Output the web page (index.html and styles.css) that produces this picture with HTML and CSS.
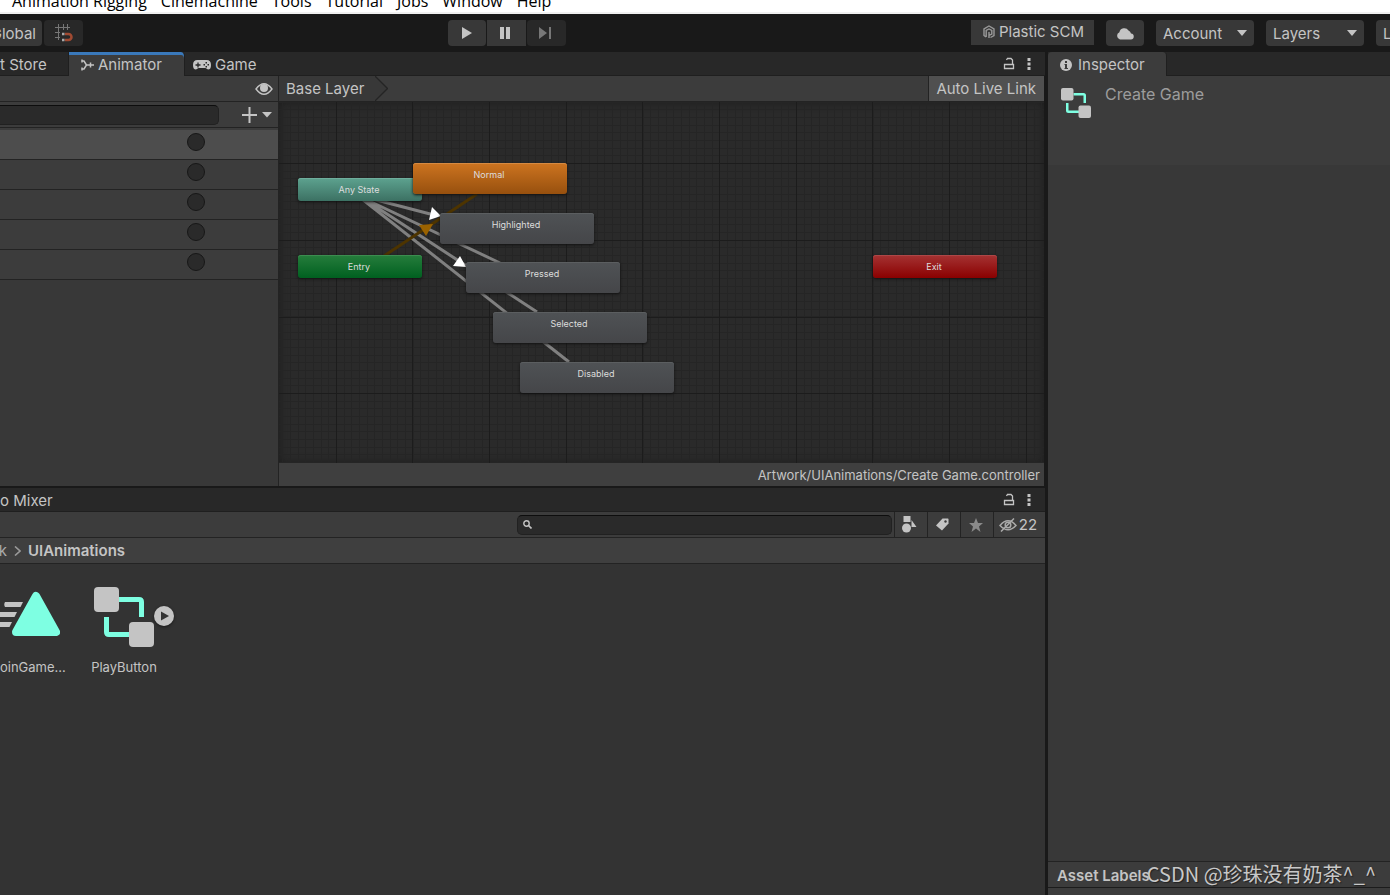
FILE: index.html
```html
<!DOCTYPE html>
<html lang="en">
<head>
<meta charset="utf-8">
<title>Animator</title>
<link rel="stylesheet" href="styles.css">
</head>
<body>
<svg class="defs" aria-hidden="true">
  <symbol id="lock" viewBox="0 0 12 14"><path d="M1.500 7.500h9v4h-9zM9.500 7V3L8 1.500H4.500L3.500 3" fill="none" stroke="currentColor" stroke-width="1.300"/></symbol>
  <symbol id="kebab" viewBox="0 0 4 14"><path d="M.5 1h3v3h-3zM.5 5.500h3v3h-3zM.5 10h3v3h-3z" fill="currentColor"/></symbol>
  <symbol id="controller" viewBox="0 0 60 60">
    <path d="M25 12.500H45Q47.500 12.500 47.500 15V30M12.500 30V45Q12.500 47.500 15 47.500H36" fill="none" stroke="#7effe2" stroke-width="5"/>
    <rect width="25" height="25" rx="4" fill="#c4c4c4"/><rect x="35" y="35" width="25" height="25" rx="4" fill="#c4c4c4"/>
  </symbol>
</svg>
<div class="app">
  <nav class="menubar">
    <a href="#">Animation Rigging</a><a href="#">Cinemachine</a><a href="#">Tools</a><a href="#">Tutorial</a><a href="#">Jobs</a><a href="#">Window</a><a href="#">Help</a>
  </nav>
  <header class="toolbar">
    <div class="tool-left">
      <button class="btn global">Global</button>
      <button class="btn dim snap" aria-label="Grid snapping">
        <svg width="18" height="18" viewBox="0 0 18 18" fill="none"><path d="M0 3.500H15M0 8.500H5M0 13.500H5M3.500 0V16M8.500 0V6M12.500 0V6" stroke="#777"/><path d="M10 10h3.500a2.500 2.500 0 0 1 0 6H10" stroke="#a04a32" stroke-width="2.500"/><path d="M7 8.700h2.500v2.500H7zM7 14.700h2.500v2.500H7z" fill="#aaa"/></svg>
      </button>
    </div>
    <div class="transport">
      <button class="btn" aria-label="Play"><svg width="10" height="12" viewBox="0 0 10 12"><path d="M0 0L10 6L0 12z" fill="currentColor"/></svg></button>
      <button class="btn square" aria-label="Pause"><svg width="10" height="12" viewBox="0 0 10 12"><path d="M0 0h4v12H0zM6 0h4v12H6z" fill="currentColor"/></svg></button>
      <button class="btn dim step" aria-label="Step" disabled><svg width="12" height="12" viewBox="0 0 12 12"><path d="M0 0L8 6L0 12zM10 0h2v12h-2z" fill="currentColor"/></svg></button>
    </div>
    <div class="tool-right">
      <button class="plastic"><svg width="12" height="14" viewBox="0 0 12 14" fill="none" stroke="currentColor" stroke-width="1.400"><path d="M3 12L1 10.500V4L6 1l5 3v6.500L7.500 12.500M3.200 12V5.500L6 4l2.800 1.500v3.500L6 10.500V13M6 10V7"/></svg>Plastic SCM</button>
      <button class="btn" aria-label="Cloud"><svg width="18" height="13" viewBox="0 0 18 13"><path d="M4 12.500a3.800 3.800 0 0 1-.6-7.200A5 5 0 0 1 12.500 3.500 4 4 0 0 1 15 6.500a3 3 0 0 1-.5 6z" fill="currentColor"/></svg></button>
      <label class="drop"><select aria-label="Account"><option>Account</option></select></label>
      <label class="drop"><select aria-label="Layers"><option>Layers</option></select></label>
      <div class="cut"><label class="drop"><select aria-label="Layout"><option>Layout</option></select></label></div>
    </div>
  </header>
  <main class="workspace">
    <section class="animator">
      <div class="tabs">
        <button class="tab store">t Store</button>
        <button class="tab active anim"><svg width="13" height="12" viewBox="0 0 13 12" fill="none" stroke="currentColor" stroke-width="1.500"><path d="M1 2h2l2.500 4L3 10H1M5 6h8M1 .5v3M1 8.500v3M9.500 3.500v5"/></svg>Animator</button>
        <button class="tab game"><svg width="18" height="10" viewBox="0 0 18 10"><path d="M4.500 0H13.500Q18 0 18 5Q18 9.500 15 9.500L12.500 8H5.500L3 9.500Q0 9.500 0 5Q0 0 4.500 0z" fill="currentColor"/><path d="M5 2.500v5M2.500 5h5" stroke="#282828" stroke-width="1.300"/><path d="M12.500 2H14v1.500h-1.500zM12.500 6H14v1.500h-1.500zM10.500 4H12v1.500h-1.500zM14.500 4H16v1.500h-1.500z" fill="#282828"/></svg>Game</button>
        <div class="tab-tools"><button aria-label="Lock"><svg width="12" height="14"><use href="#lock"/></svg></button><button aria-label="More"><svg width="4" height="14"><use href="#kebab"/></svg></button></div>
      </div>
      <div class="anim-body">
        <aside class="params">
          <div class="bar eye"><button aria-label="Hide parameters"><svg width="18" height="12" viewBox="0 0 18 12"><path d="M1 6Q9-4.500 17 6Q9 16.500 1 6z" fill="none" stroke="currentColor" stroke-width="1.400"/><circle cx="9" cy="5" r="4" fill="currentColor"/></svg></button></div>
          <div class="bar find"><input type="text" class="field" aria-label="Search parameters"><button aria-label="Add parameter"><svg width="30" height="16" viewBox="0 0 30 16"><path d="M0 8H15M7.500 0V16" stroke="currentColor" stroke-width="2"/><path d="M20 5h10l-5 5.500z" fill="currentColor"/></svg></button></div>
          <div class="rows">
            <div class="row on"><input type="radio" aria-label="Normal trigger"></div>
            <div class="row"><input type="radio" aria-label="Highlighted trigger"></div>
            <div class="row"><input type="radio" aria-label="Pressed trigger"></div>
            <div class="row"><input type="radio" aria-label="Selected trigger"></div>
            <div class="row"><input type="radio" aria-label="Disabled trigger"></div>
          </div>
        </aside>
        <div class="graph-pane">
          <div class="bar crumbs"><button class="layer">Base Layer</button><svg width="13" height="25" viewBox="0 0 13 25"><path d="M0 0L12.500 12.500L0 25z" fill="#383838"/><path d="M0 0L12.500 12.500L0 25" fill="none" stroke="#242424" stroke-width="1.300"/></svg><button class="live">Auto Live Link</button></div>
          <div class="graph">
            <svg class="wires" width="100%" height="100%">
              <defs>
                <pattern id="minor" x="57" y="61" width="23" height="23" patternUnits="userSpaceOnUse"><path d="M.5 0V23M8.500 0V23M15.500 0V23M0 .5H23M0 8.500H23M0 15.500H23" stroke="#252525"/></pattern>
                <pattern id="major" x="57" y="61" width="230" height="230" patternUnits="userSpaceOnUse"><path d="M.5 0V230M76.500 0V230M153.500 0V230M0 .5H230M0 77.500H230M0 154.500H230" stroke="#1c1c1c"/></pattern>
              </defs>
              <rect width="100%" height="100%" fill="url(#minor)"/><rect width="100%" height="100%" fill="url(#major)"/>
              <g stroke="#808080" stroke-width="3"><path d="M86 95L155 113M86 97L221 161M85 97L258 210M83 97L290 260"/></g>
              <path d="M105 154L198 92" stroke="#4d3400" stroke-width="3"/>
              <path d="M153 105L150 118L162 114zM181 154L174 164L187 165z" fill="#fff"/>
              <path d="M140 123L154 122L147 134z" fill="#9a6200"/>
            </svg>
            <div class="node small any">Any State</div>
            <div class="node small entry">Entry</div>
            <div class="node small exit">Exit</div>
            <div class="node normal">Normal</div>
            <div class="node highlighted">Highlighted</div>
            <div class="node pressed">Pressed</div>
            <div class="node selected">Selected</div>
            <div class="node disabled">Disabled</div>
          </div>
          <div class="path">Artwork/UIAnimations/Create Game.controller</div>
        </div>
      </div>
    </section>
    <section class="project">
      <div class="tabs">
        <button class="tab mixer">o Mixer</button>
        <div class="tab-tools"><button aria-label="Lock"><svg width="12" height="14"><use href="#lock"/></svg></button><button aria-label="More"><svg width="4" height="14"><use href="#kebab"/></svg></button></div>
      </div>
      <div class="bar search">
        <label class="field searchbox"><svg width="9" height="9" viewBox="0 0 9 9" fill="none" stroke="#c4c4c4"><circle cx="3.500" cy="3.500" r="2.700" stroke-width="1.400"/><path d="M5.500 5.500L8.500 8.500" stroke-width="1.700"/></svg><input type="text" aria-label="Search assets"></label>
        <button class="cell" aria-label="Search by type"><svg width="15" height="17" viewBox="0 0 15 17" fill="currentColor"><path d="M1.500 0h7v6h-7zM9.500 11V4l5 7z"/><circle cx="4.500" cy="12" r="4.500"/></svg></button>
        <button class="cell" aria-label="Search by label"><svg width="13" height="13" viewBox="0 0 13 13"><path d="M6.500.5L12 .5L12.500 1V5.500L6 12.500L0 7.500z" fill="currentColor"/><circle cx="9.500" cy="3.500" r="1.200" fill="#3c3c3c"/></svg></button>
        <button class="cell" aria-label="Favorites"><svg width="14" height="14" viewBox="0 0 14 14"><path d="M7 0L9 5H14L10 8.500L11.500 14L7 10.500L2.500 14L4 8.500L0 5H5z" fill="#8a8a8a"/></svg></button>
        <button class="cell hidden-count"><svg width="18" height="14" viewBox="0 0 18 14" fill="none" stroke="#aaa" stroke-width="1.500"><path d="M1 7.500Q9-2 17 7.500Q9 16 1 7.500zM2 13.500L15 .5"/><circle cx="9" cy="7" r="2.800"/></svg>22</button>
      </div>
      <div class="bar breadcrumb"><a href="#">k</a><svg width="7" height="10" viewBox="0 0 7 10"><path d="M1 0.500L6 5L1 9.500" fill="none" stroke="#9a9a9a" stroke-width="1.600"/></svg><b>UIAnimations</b></div>
      <div class="assets">
        <figure class="asset join"><svg width="60" height="60" viewBox="0 0 60 60"><path d="M5 15H23L20.500 20H5Q3.500 17.500 5 15zM-4 25H17L14.500 30H-4zM-4 35H12L9.500 40H-4z" fill="#c4c4c4"/><path d="M36 9L56 45H16z" fill="#7effe2" stroke="#7effe2" stroke-width="8" stroke-linejoin="round"/></svg><figcaption>oinGame...</figcaption></figure>
        <figure class="asset"><svg width="60" height="60"><use href="#controller"/></svg><button class="expand" aria-label="Expand"><svg width="20" height="20" viewBox="0 0 20 20"><circle cx="10" cy="10" r="10" fill="#c4c4c4"/><path d="M7 5.500L15 10L7 14.500z" fill="#333"/></svg></button><figcaption>PlayButton</figcaption></figure>
      </div>
    </section>
    <section class="inspector">
      <div class="tabs"><button class="tab active info"><svg width="12" height="12" viewBox="0 0 12 12"><circle cx="6" cy="6" r="6" fill="currentColor"/><path d="M5 2h2v2H5zM4.500 5H7v4h1v1H4.500V9H5V6h-.5z" fill="#3c3c3c"/></svg>Inspector</button></div>
      <div class="object"><svg width="30" height="30"><use href="#controller"/></svg><span>Create Game</span></div>
      <div class="empty"></div>
      <div class="labels">Asset Labels</div>
      <div class="tail"></div>
    </section>
  </main>
  <div class="watermark">CSDN @珍珠没有奶茶^_^</div>
</div>
</body>
</html>
```
FILE: styles.css
```css
* { box-sizing: border-box; }
body { margin: 0; background: #191919; color: #c4c4c4; font: 15px/20px Inter, "Noto Sans", sans-serif; }
button, input, select { font: inherit; color: inherit; border: 0; padding: 0; margin: 0; background: none; }
svg { display: block; flex: none; }
.defs { position: absolute; width: 0; height: 0; }
.app { position: relative; display: flex; flex-direction: column; height: 100vh; overflow: hidden; }

.menubar { flex: none; display: flex; align-items: flex-end; gap: 14px; height: 14px; padding-left: 12px; overflow: hidden; background: #fff; border-bottom: 2px solid #f0f0f0; font: 16px/22px "Open Sans", "Noto Sans", sans-serif; }
.menubar a { color: #000; text-decoration: none; white-space: nowrap; }

.toolbar { flex: none; display: flex; align-items: center; height: 38px; background: #191919; }
.tool-left { flex: none; display: flex; gap: 2px; width: 448px; }
.btn { display: flex; align-items: center; justify-content: center; width: 38px; height: 26px; background: #383838; border-radius: 4px; }
.btn.dim { background: #282828; color: #777; width: 39px; }
.btn.square { border-radius: 0; width: 39px; padding-right: 4px; }
.btn.step { padding-right: 4px; }
.btn.global { width: 62px; margin-left: -20px; padding: 2px 6px 0 0; justify-content: flex-end; }
.transport { display: flex; gap: 1px; }
.tool-right { display: flex; align-items: center; gap: 12px; margin-left: auto; }
.plastic { display: flex; align-items: center; gap: 4px; height: 25px; padding: 0 10px 0 12px; background: #383838; margin-bottom: 2px; }
.plastic svg { color: #999; }
.drop { position: relative; display: block; width: 98px; height: 26px; background: #383838; border-radius: 4px; }
.drop select { appearance: none; width: 100%; height: 26px; padding: 2px 7px 0; }
.drop::after { content: ""; position: absolute; right: 7px; top: 10px; border: 5px solid transparent; border-top: 6px solid #c4c4c4; border-bottom: 0; pointer-events: none; }
.cut { width: 14px; overflow: hidden; }

.workspace { flex: 1; min-height: 0; display: grid; grid-template-columns: minmax(0, 1fr) 342px; grid-template-rows: 434fr 407fr; column-gap: 3px; row-gap: 2px; }
.animator, .project, .inspector { display: flex; flex-direction: column; min-width: 0; min-height: 0; }
.inspector { grid-column: 2; grid-row: 1 / 3; }
.animator { grid-column: 1; grid-row: 1; }
.project { grid-column: 1; grid-row: 2; }
.tabs { flex: none; display: flex; height: 24px; background: #282828; border-bottom: 1px solid #1f1f1f; }
.tab { display: flex; align-items: center; gap: 4px; height: 24px; padding-top: 2px; white-space: nowrap; }
.tab.active { background: #3c3c3c; border-radius: 4px 4px 0 0; border-right: 1px solid #1f1f1f; }
.store { width: 69px; border-right: 1px solid #1f1f1f; }
.tab.anim { width: 116px; padding: 2px 12px 0; border-radius: 0 4px 0 0; box-shadow: inset 0 3px #3a79bb; }
.tab.game { padding-left: 8px; }
.tab.info { padding: 2px 21px 0 12px; gap: 6px; }
.tab-tools { display: flex; align-items: center; gap: 12px; margin-left: auto; padding-right: 14px; }

.bar { flex: none; display: flex; align-items: center; height: 26px; background: #3c3c3c; border-bottom: 1px solid #232323; }
.anim-body { flex: 1; min-height: 0; display: flex; }
.params { flex: none; width: 279px; background: #383838; border-right: 1px solid #232323; }
.eye { justify-content: flex-end; padding-right: 5px; }
.find { justify-content: space-between; padding-right: 6px; }
.field { height: 20px; background: #2a2a2a; border: 1px solid #212121; border-top-color: #0d0d0d; border-radius: 5px; }
.find .field { width: 224px; margin-left: -5px; }
.rows { border-top: 2px solid #3c3c3c; }
.row { height: 30px; padding: 3px 0 0 187px; background: #3c3c3c; border-bottom: 1px solid #232323; }
.row.on { background: #4d4d4d; }
.row input { appearance: none; display: block; width: 18px; height: 18px; background: #2a2a2a; border: 1px solid #171717; border-radius: 50%; }
.graph-pane { flex: 1; min-width: 0; display: flex; flex-direction: column; padding-right: 1px; }
.layer { height: 25px; padding: 0 11px 0 7px; background: #383838; }
.live { height: 25px; margin-left: auto; padding: 0 8px 0 7px; background: #505050; border-left: 1px solid #232323; }
.graph { position: relative; flex: 1; min-height: 0; overflow: hidden; background: #2a2a2a; box-shadow: inset 0 0 10px #1c1c1c; }
.wires { position: absolute; inset: 0; }
.path { flex: none; height: 23px; padding-right: 4px; background: #3f3f3f; font-size: 13px; line-height: 24px; text-align: right; }

.node { position: absolute; width: 154px; height: 31px; border-radius: 3px; background: linear-gradient(#4f5255, #454649); box-shadow: 0 1px 3px #111, inset 0 1px #5b5e60; color: #ddd; font-size: 9px; line-height: 24px; text-align: center; padding-right: 2px; }
.small { width: 124px; height: 23px; }
.any { left: 19px; top: 76px; background: linear-gradient(#5da28f, #3c7163); box-shadow: 0 1px 3px #111, inset 0 1px #6fae9d; }
.entry { left: 19px; top: 153px; background: linear-gradient(#267d3c, #006020); box-shadow: 0 1px 3px #111, inset 0 1px #3c8d50; }
.exit { left: 594px; top: 153px; background: linear-gradient(#a53333, #8a0000); box-shadow: 0 1px 3px #111, inset 0 1px #ad4747; }
.normal { left: 134px; top: 61px; background: linear-gradient(#cd7420, #97500e); box-shadow: 0 1px 3px #111, inset 0 1px #d58a42; }
.highlighted { left: 161px; top: 111px; }
.pressed { left: 187px; top: 160px; }
.selected { left: 214px; top: 210px; }
.disabled { left: 241px; top: 260px; }

.project { background: #333; }
.search { justify-content: flex-end; }
.searchbox { display: flex; align-items: center; gap: 6px; width: 375px; margin-right: 2px; padding-left: 5px; }
.searchbox input { flex: 1; min-width: 0; outline: 0; }
.cell { display: flex; align-items: center; justify-content: center; width: 33px; height: 25px; padding-right: 3px; border-left: 1px solid #232323; }
.hidden-count { width: 52px; gap: 2px; }
.breadcrumb { background: #3f3f3f; gap: 7px; }
.breadcrumb a { width: 7px; direction: rtl; color: #aaa; text-decoration: none; }
.breadcrumb b { font-weight: 600; }
.assets { display: flex; gap: 24px; padding-top: 23px; }
.asset { position: relative; display: flex; flex-direction: column; align-items: center; gap: 10px; width: 70px; margin: 0; font-size: 13px; white-space: nowrap; }
.join { width: 65px; align-items: flex-start; }
.expand { position: absolute; left: 65px; top: 19px; border-radius: 50%; box-shadow: 0 1px 3px #1a1a1a; }

.object { display: flex; gap: 14px; height: 89px; padding: 12px 13px; background: #3c3c3c; font-size: 16px; line-height: 13px; color: #9c9c9c; }
.empty { flex: 1; background: #383838; }
.labels { height: 27px; padding-left: 9px; background: #3c3c3c; border-top: 1px solid #232323; border-bottom: 1px solid #1c1c1c; font-weight: 600; line-height: 27px; }
.tail { height: 7px; background: #3c3c3c; }
.watermark { position: absolute; right: 14px; bottom: 8px; color: #c8c8c8; font: 20px/26px "Noto Sans CJK SC", sans-serif; text-shadow: 1px 1px 1px #222; pointer-events: none; }
```
